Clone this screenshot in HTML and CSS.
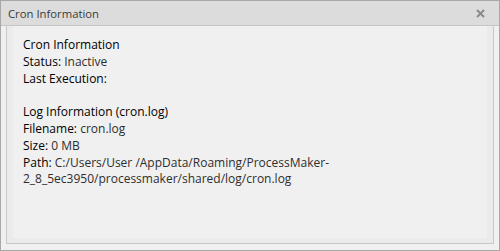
FILE: index.html
```html
<!DOCTYPE html>
<html>
<head>
<meta charset="utf-8">
<link rel="stylesheet" href="styles.css">
</head>
<body>
<div class="window">
  <div class="titlebar">
    <span class="title">Cron Information</span>
    <svg class="close" width="9" height="9" viewBox="0 0 9 9"><path d="M1 1L8 8M8 1L1 8" stroke="#8a8a8a" stroke-width="2"/></svg>
  </div>
  <div class="body">
    <div class="panel">
      <div class="content">
        <div class="line"><span class="label">Cron Information</span></div>
        <div class="line"><span class="label">Status:</span> <span class="value">Inactive</span></div>
        <div class="line"><span class="label">Last Execution:</span></div>
        <div class="line">&nbsp;</div>
        <div class="line"><span class="label">Log Information (cron.log)</span></div>
        <div class="line"><span class="label">Filename:</span> <span class="value">cron.log</span></div>
        <div class="line"><span class="label">Size:</span> <span class="value">0 MB</span></div>
        <div class="line"><span class="label">Path:</span> <span class="value">C:/Users/User /AppData/Roaming/ProcessMaker-2_8_5ec3950/processmaker/shared/log/cron.log</span></div>
      </div>
    </div>
  </div>
</div>
</body>
</html>
```
FILE: styles.css
```css
html, body {
  margin: 0;
  padding: 0;
  background: #ffffff;
}
.window {
  width: 500px;
  height: 251px;
  box-sizing: border-box;
  border: 1px solid #a8a8a8;
  background: #f0f0f0;
  display: flex;
  flex-direction: column;
  font-family: "Open Sans", "DejaVu Sans", sans-serif;
}
.titlebar {
  height: 24px;
  flex: none;
  background: #dcdcdc;
  border-bottom: 1px solid #c6c6c6;
  display: flex;
  align-items: center;
  justify-content: space-between;
  padding: 0 14px 0 7px;
}
.title {
  font-size: 11.3px;
  color: #3a3a3a;
}
.close {
  display: block;
}
.body {
  flex: 1;
  padding: 0 5px 6px 5px;
  display: flex;
}
.panel {
  flex: 1;
  border: 1px solid #c8c8c8;
  border-top: none;
  background: #ebebeb;
  padding: 0 6px 5px 6px;
  display: flex;
}
.content {
  flex: 1;
  background: #f0f0f0;
  padding: 11px 10px 0 10px;
  font-size: 12px;
  line-height: 16.8px;
}
.label {
  color: #000000;
}
.value {
  color: #2e2e2e;
}
```
